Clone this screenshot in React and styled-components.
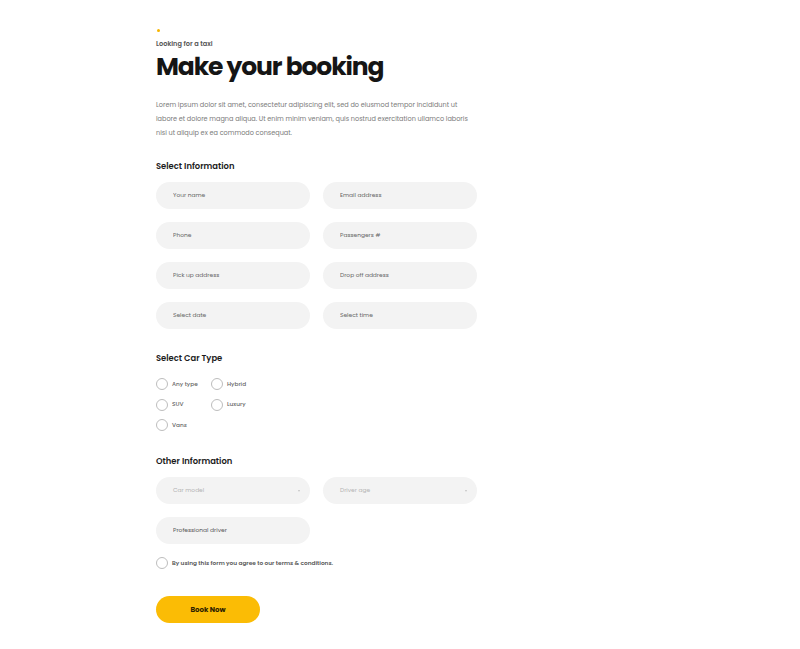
import React, { useState } from 'react'
import styled, { createGlobalStyle } from 'styled-components'

const GlobalStyle = createGlobalStyle`
  body {
    margin: 0;
    background: #ffffff;
    font-family: 'Poppins', 'DejaVu Sans', sans-serif;
  }
`

const textInputs = [
  ['Your name', 'Email address'],
  ['Phone', 'Passengers #'],
  ['Pick up address', 'Drop off address'],
  ['Select date', 'Select time'],
]

const carTypes = [
  ['Any type', 'Hybrid'],
  ['SUV', 'Luxury'],
  ['Vans'],
]

const App = () => {
  const [carType, setCarType] = useState('')
  const [agree, setAgree] = useState(false)

  return (
    <Page>
      <GlobalStyle />
      <Form onSubmit={(e) => e.preventDefault()}>
        <Dot />
        <Eyebrow>Looking for a taxi</Eyebrow>
        <Title>Make your booking</Title>
        <Intro>
          Lorem ipsum dolor sit amet, consectetur adipiscing elit, sed do
          eiusmod tempor incididunt ut labore et dolore magna aliqua. Ut enim
          minim veniam, quis nostrud exercitation ullamco laboris nisi ut
          aliquip ex ea commodo consequat.
        </Intro>

        <SectionTitle>Select Information</SectionTitle>
        <Grid>
          {textInputs.flat().map((label) => (
            <Field key={label} placeholder={label} />
          ))}
        </Grid>

        <SectionTitle $top={23}>Select Car Type</SectionTitle>
        <RadioGrid>
          {carTypes.flat().map((name) => (
            <RadioLabel key={name} onClick={() => setCarType(name)}>
              <Circle $checked={carType === name} />
              {name}
            </RadioLabel>
          ))}
        </RadioGrid>

        <SectionTitle $top={24}>Other Information</SectionTitle>
        <Grid>
          <SelectBox>
            Car model
            <Caret />
          </SelectBox>
          <SelectBox>
            Driver age
            <Caret />
          </SelectBox>
          <Field placeholder="Professional driver" $dark />
        </Grid>

        <Terms onClick={() => setAgree(!agree)}>
          <Circle $checked={agree} />
          By using this form you agree to our terms &amp; conditions.
        </Terms>

        <BookButton type="submit">Book Now</BookButton>
      </Form>
    </Page>
  )
}

export default App

const Page = styled.div`
  width: 800px;
  min-height: 649px;
  box-sizing: border-box;
  padding: 29px 0 0 156px;
`

const Form = styled.form`
  width: 321px;
  display: flex;
  flex-direction: column;
`

const Dot = styled.span`
  width: 3px;
  height: 3px;
  border-radius: 50%;
  background: #f7b500;
  margin-left: 1px;
`

const Eyebrow = styled.div`
  margin-top: 7px;
  font-size: 6.6px;
  line-height: 10px;
  font-weight: 600;
  color: #555555;
`

const Title = styled.h1`
  margin: 2px 0 0;
  font-size: 25px;
  line-height: 31px;
  font-weight: 700;
  letter-spacing: -1.1px;
  color: #151515;
`

const Intro = styled.p`
  margin: 16px 0 0;
  font-size: 6.5px;
  line-height: 14px;
  color: #7a7a7a;
`

const SectionTitle = styled.h3`
  margin: ${(p) => p.$top || 20}px 0 10px;
  font-size: 8.4px;
  line-height: 12px;
  font-weight: 600;
  color: #1c1c1c;
`

const Grid = styled.div`
  display: grid;
  grid-template-columns: 154px 154px;
  column-gap: 13px;
  row-gap: 13px;
`

const Field = styled.input`
  height: 27px;
  box-sizing: border-box;
  border: none;
  outline: none;
  border-radius: 14px;
  background: #f3f3f3;
  padding: 0 17px;
  font-family: inherit;
  font-size: 5.9px;
  color: #444444;

  &::placeholder {
    color: ${(p) => (p.$dark ? '#555555' : '#666666')};
  }
`

const SelectBox = styled.div`
  height: 27px;
  box-sizing: border-box;
  border-radius: 14px;
  background: #f3f3f3;
  padding: 0 10px 0 17px;
  display: flex;
  align-items: center;
  justify-content: space-between;
  font-size: 5.9px;
  color: #b4b4b4;
`

const Caret = styled.span`
  width: 0;
  height: 0;
  border-left: 1.5px solid transparent;
  border-right: 1.5px solid transparent;
  border-top: 2px solid #c4c4c4;
`

const RadioGrid = styled.div`
  margin-top: 4px;
  display: grid;
  grid-template-columns: 55px auto;
  row-gap: 8.5px;
`

const RadioLabel = styled.label`
  display: flex;
  align-items: center;
  gap: 4px;
  height: 12px;
  font-size: 5.8px;
  font-weight: 500;
  color: #666666;
  cursor: pointer;
`

const Circle = styled.span`
  width: 12px;
  height: 12px;
  box-sizing: border-box;
  border-radius: 50%;
  border: 1.4px solid #bdbdbd;
  background: ${(p) => (p.$checked ? '#fbbc05' : '#ffffff')};
  flex-shrink: 0;
`

const Terms = styled.label`
  margin-top: 13px;
  display: flex;
  align-items: center;
  gap: 4px;
  height: 12px;
  font-size: 5.8px;
  font-weight: 600;
  color: #555555;
  cursor: pointer;
`

const BookButton = styled.button`
  margin-top: 27px;
  width: 104px;
  height: 27px;
  border: none;
  border-radius: 14px;
  background: #fbbc05;
  font-family: inherit;
  font-size: 7px;
  font-weight: 700;
  color: #2a2000;
  cursor: pointer;
`
